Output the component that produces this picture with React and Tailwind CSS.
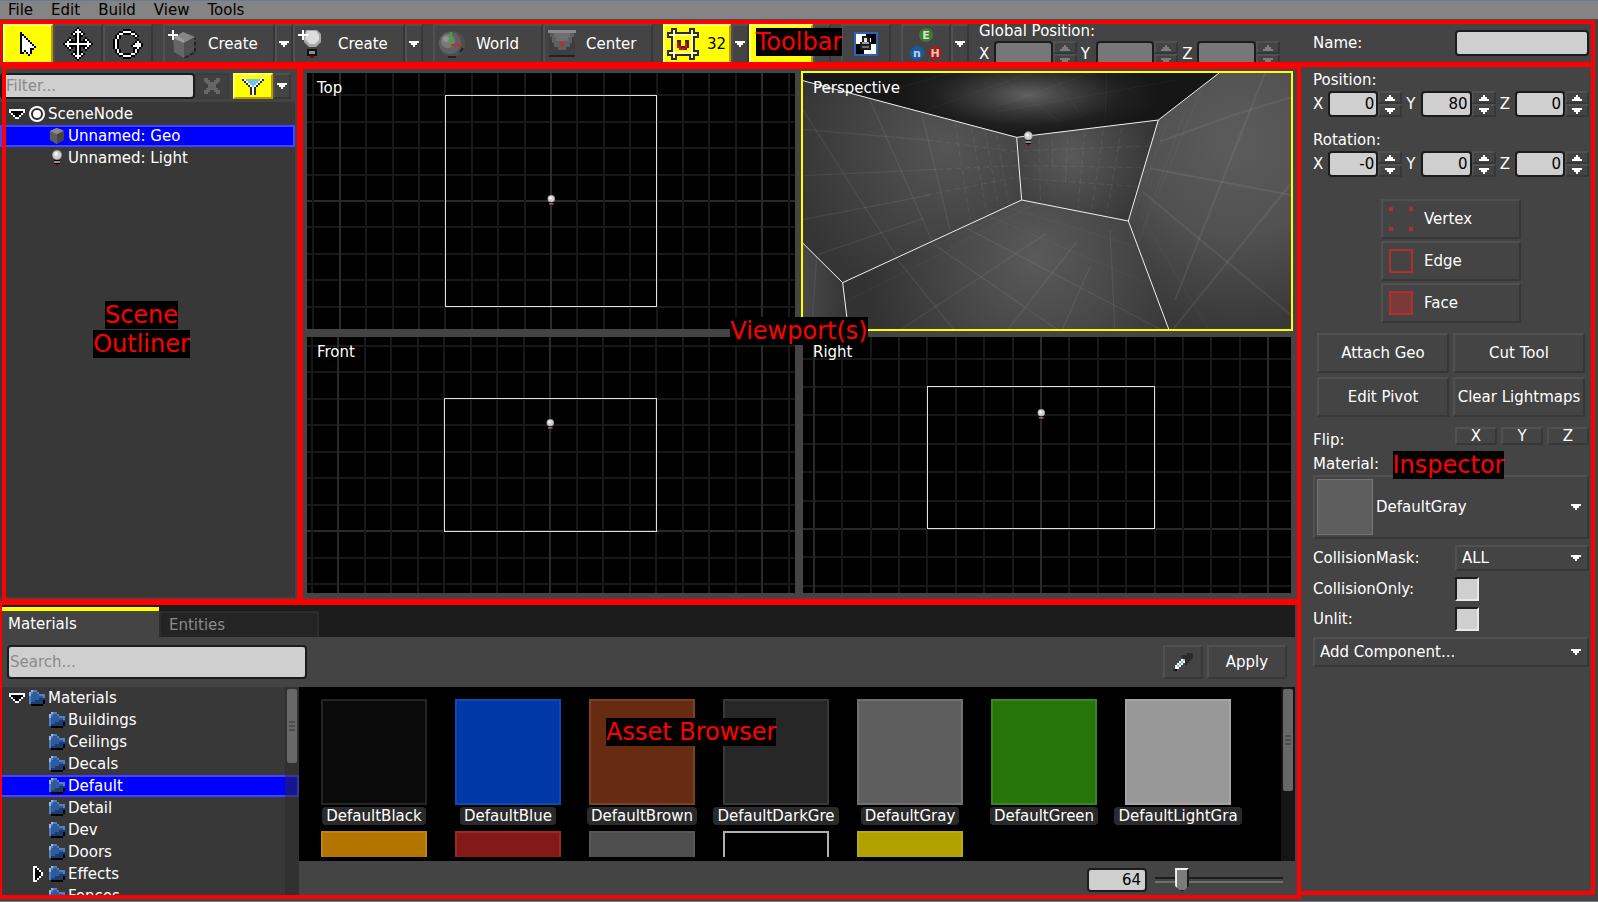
import { useState } from "react";
import clsx from "clsx";

// ---------------- Shared styles ----------------
const bevel =
  "border-2 border-t-[#515151] border-l-[#515151] border-b-[#373737] border-r-[#373737] bg-[#444444]";
const fieldBase =
  "min-w-0 rounded-[4px] border-2 border-[#1c1c1c] text-black placeholder:text-[#8a8a8a] outline-none";
const field = fieldBase + " bg-[#cfcfcf]";
const yellow =
  "border-2 border-t-[#ffff77] border-l-[#ffff77] border-b-[#bb9900] border-r-[#bb9900] bg-[#ffff00] text-black";

// ---------------- Pixel icons ----------------
const COLORS = {
  K: "#000000",
  W: "#ffffff",
  G: "#666666",
  D: "#2b2b2b",
  Y: "#ffff00",
  P: "#ffff9a",
  R: "#b02020",
  M: "#701010",
  L: "#9db8e0",
  B: "#5580c0",
  F: "#2f5a9c",
  N: "#1c3c70",
  C: "#6fc4e8",
};

function Pixels({ rows, className }) {
  return (
    <svg
      width={rows[0].length * 2}
      height={rows.length * 2}
      viewBox={`0 0 ${rows[0].length} ${rows.length}`}
      shapeRendering="crispEdges"
      className={clsx("shrink-0", className)}
      aria-hidden="true"
    >
      {rows.map((row, y) =>
        row
          .split("")
          .map((c, x) =>
            COLORS[c] ? (
              <rect key={`${x}-${y}`} x={x} y={y} width="1" height="1" fill={COLORS[c]} />
            ) : null
          )
      )}
    </svg>
  );
}

const CURSOR = [
  "K.......",
  "KK......",
  "KWK.....",
  "KWWK....",
  "KWWWK...",
  "KWWWWK..",
  "KWWWWWK.",
  "KWWWWWWK",
  "KWWWWKK.",
  "KWKWWK..",
  "KK.KWK..",
  "....K...",
];

const MOVE = [
  ".......K.......",
  "......KWK......",
  ".....KWWWK.....",
  "....KWKWKWK....",
  ".....KKWKK.....",
  "...K..KWK..K...",
  "..KWK.KWK.KWK..",
  ".KWKKKKWKKKKWK.",
  "KWWWWWWWWWWWWWK",
  ".KWKKKKWKKKKWK.",
  "..KWK.KWK.KWK..",
  "...K..KWK..K...",
  ".....KKWKK.....",
  "....KWKWKWK....",
  ".....KWWWK.....",
  "......KWK......",
  ".......K.......",
];

const ROTATE = [
  ".....KKKK......",
  "...KKWWWWKK....",
  "..KWWKKKKWWK...",
  ".KWK......KWK..",
  ".KWK.......K...",
  "KWK.........K..",
  "KWK........KWK.",
  "KWK.......KWWWK",
  "KWK......KWWWWK",
  "KWK.......KKWK.",
  ".KWK......KWK..",
  ".KWK......KWK..",
  "..KWWKKKKWWK...",
  "...KKWWWWKK....",
  ".....KKKK......",
];

const SNAP = [
  "..DDD......DDD..",
  "..DPD......DPD..",
  "DDDPDDDDDDDDPDDD",
  "DPPWPPPPPPPPWPPD",
  "DDDPYYYYYYYYPDDD",
  "..DPYYYYYYYYPD..",
  "..DPYDDYYDDYPD..",
  "..DPYRMYYRMYPD..",
  "..DPYRMYYRMYPD..",
  "..DPYRRMMRMYPD..",
  "..DPYYRRRMYYPD..",
  "DDDPYYYYYYYYPDDD",
  "DPPWPPPPPPPPWPPD",
  "DDDPDDDDDDDDPDDD",
  "..DPD......DPD..",
  "..DDD......DDD..",
];

const FUNNEL = [
  "W.........W",
  "DWCCCCCCCWD",
  ".DWCCCCCWD.",
  "..DWCCCWD..",
  "...DWCWD...",
  "....DWD....",
  "....DWD....",
  "....DWD....",
  "....DWD....",
];

const CROSS = [
  "GG....GG",
  "GGG..GGG",
  ".GGGGGG.",
  "..GGGG..",
  "..GGGG..",
  ".GGGGGG.",
  "GGG..GGG",
  "GG....GG",
];

const FOLDER = [
  ".LBB....",
  "LBFFB...",
  "LFFFFBBB",
  "BFFFFFFB",
  "BFFFFNNN",
  "BFFNNNNK",
  "BNNNNNNK",
  ".KKKKKK.",
];

const ARROW_DOWN = [
  "WWWWWWWW",
  "WKKKKKKW",
  ".WKKKKW.",
  "..WKKW..",
  "...WW...",
];

const ARROW_RIGHT = [
  "WW...",
  "WKW..",
  "WKKW.",
  "WKKKW",
  "WKKKW",
  "WKKW.",
  "WKW..",
  "WW...",
];

const DROPPER = [
  ".......DDD",
  "....DDDDDD",
  ".....DDDDD",
  "....WCDDD.",
  "...WCWDD..",
  "..WCW.D...",
  ".WCW......",
  ".WW.......",
  "DK........",
];

function Caret({ color = "#ffffff", className }) {
  return (
    <svg width="10" height="6" viewBox="0 0 10 6" shapeRendering="crispEdges" className={clsx("shrink-0", className)} aria-hidden="true">
      <path d="M0 0h10v2h-2v2h-2v2h-2v-2h-2v-2h-2z" fill={color} />
    </svg>
  );
}

function BulbShape() {
  return (
    <>
      <circle cx="7" cy="5" r="5" fill="#9a9a9a" />
      <circle cx="7" cy="5" r="4" fill="#cfcfcf" />
      <circle cx="6" cy="4" r="2" fill="#f2f2f2" />
      <rect x="4" y="10" width="6" height="1" fill="#000" />
      <rect x="4" y="11" width="6" height="2" fill="#8f8f8f" />
      <rect x="4" y="13" width="6" height="1" fill="#000" />
      <rect x="6" y="14" width="2" height="2" fill="#8a0000" />
    </>
  );
}

function SmallBulb() {
  return (
    <svg width="16" height="16" viewBox="-1 0 16 16" className="shrink-0" aria-hidden="true">
      <BulbShape />
    </svg>
  );
}

function SceneIcon() {
  return (
    <svg width="16" height="16" viewBox="0 0 16 16" className="shrink-0" aria-hidden="true">
      <circle cx="8" cy="8" r="7" fill="#2b2b2b" stroke="#fff" strokeWidth="2" />
      <circle cx="8" cy="8" r="4" fill="#fff" />
    </svg>
  );
}

function SmallCube() {
  return (
    <svg width="16" height="16" viewBox="1 1 25 26" className="shrink-0" aria-hidden="true">
      <path d="M13 1 24 5 25 20 13 27 2 20 2 6Z" fill="#6f6f6f" />
      <path d="M13 11 25 6 25 20 13 27Z" fill="#444" />
      <path d="M2 6 13 1 24 5 13 11Z" fill="#8a8a8a" />
      <path d="M2 6 13 11 13 27 2 20Z" fill="#5c5c5c" />
    </svg>
  );
}

function Spark() {
  return <path d="M4 0h2v4h4v2h-4v4h-2v-4h-4v-2h4z" fill="#fff" />;
}

function NewGeoIcon() {
  return (
    <svg width="28" height="28" viewBox="0 0 28 28" className="shrink-0" aria-hidden="true">
      <path d="M5 8 15 2 27 7 16 13Z" fill="#868686" />
      <path d="M5 8 16 13 16 28 6 22Z" fill="#666666" />
      <path d="M16 13 27 7 27 22 16 28Z" fill="#4f4f4f" />
      <path d="M5 8 9 5 16 10 16 13Z" fill="#9a9a9a" />
      <path d="M17 28 27 22V8" fill="none" stroke="#222" strokeWidth="2" strokeDasharray="4 2" />
      <Spark />
    </svg>
  );
}

function NewLightIcon() {
  return (
    <svg width="28" height="28" viewBox="0 0 28 28" className="shrink-0" aria-hidden="true">
      <path d="M8 0h11l4 4v8l-5 5h-7l-5-5V5z" fill="#a8a8a8" />
      <path d="M9 1h9l3 4v5l-4 4h-5L7 9z" fill="#dcdcdc" />
      <path d="M9 19h10v7H9z" fill="#111" />
      <path d="M11 21h6v3h-6z" fill="#8a8a8a" />
      <path d="M12 26h4v2h-4z" fill="#8a0000" />
      <Spark />
    </svg>
  );
}

function WorldIcon() {
  return (
    <svg width="28" height="28" viewBox="0 0 28 28" className="shrink-0" aria-hidden="true">
      <circle cx="14" cy="14" r="13" fill="#4e4e4e" />
      <circle cx="12" cy="13" r="11" fill="#606060" />
      <circle cx="10" cy="11" r="7" fill="#7a7a7a" />
      <circle cx="8" cy="9" r="3" fill="#929292" />
      <path d="M10 27h8M22 22l3-4" stroke="#222" strokeWidth="2" />
      <path d="M13 2v13" stroke="#30b030" strokeWidth="2" />
      <path d="M13 15h11" stroke="#b83030" strokeWidth="2" />
    </svg>
  );
}

function CenterIcon() {
  return (
    <svg width="28" height="28" viewBox="0 0 28 28" shapeRendering="crispEdges" className="shrink-0" aria-hidden="true">
      <path d="M1 3h26v24H1z" fill="#3e3e3e" />
      <path d="M1 25h26v2H1z" fill="#222" />
      <path d="M0 0h28v3H0z" fill="#8a8a8a" />
      <path d="M2 3h24v4h-2v6h-2v4h-4v3h-8v-3H6v-4H4V7H2z" fill="#5f5f5f" />
      <path d="M6 3h16v4h-2v4H8V7H6z" fill="#6f6f6f" />
      <path d="M12 12h4v4h-4z" fill="#b83030" />
    </svg>
  );
}

function LockIcon() {
  return (
    <svg width="24" height="24" viewBox="0 0 24 24" shapeRendering="crispEdges" className="shrink-0" aria-hidden="true">
      <path d="M0 0h24v24H0z" fill="#3060b8" />
      <path d="M2 2h20v20H2z" fill="#fff" />
      <path d="M2 12h4v6h4v4H2zM12 2h10v10h-5V6h-5z" fill="#000" />
      <path d="M8 4h6v2h2v4h1v8H6v-8h2z" fill="#1c1c1c" />
      <path d="M10 6h3v4h-3z" fill="#e0e0e0" />
      <path d="M8 10h7v2H8z" fill="#9a9a9a" />
      <path d="M8 14h7v2H8z" fill="#707070" />
    </svg>
  );
}

function AxisIcon() {
  return (
    <svg width="32" height="34" viewBox="0 0 32 34" className="shrink-0 font-bold" fontFamily="DejaVu Sans" fontSize="11" textAnchor="middle" aria-hidden="true">
      <circle cx="16" cy="8" r="7" fill="#3f7a30" />
      <circle cx="7" cy="26" r="7" fill="#1f5a98" />
      <circle cx="25" cy="26" r="7" fill="#982020" />
      <text x="16" y="12" fill="#d0e8c8">E</text>
      <text x="7" y="30" fill="#b8d4f4">n</text>
      <text x="25" y="30" fill="#f0c0b0">H</text>
    </svg>
  );
}

// ---------------- Annotations ----------------
function Frame({ className }) {
  return <div className={clsx("pointer-events-none absolute z-20 border-4 border-[#ff0000]", className)} />;
}

function Note({ className, children }) {
  return (
    <div className={clsx("pointer-events-none absolute z-30 text-center text-[24px] leading-[29px] text-[#ff0000]", className)}>
      <span className="bg-black">{children}</span>
    </div>
  );
}

// ---------------- Menu + Toolbar ----------------
function MenuBar() {
  return (
    <nav className="flex h-5 items-center gap-[18px] border-t border-b border-t-[#6a7a90] border-b-[#4a4a4a] bg-[#848484] px-2 text-black">
      {["File", "Edit", "Build", "View", "Tools"].map((item) => (
        <button key={item} type="button">
          {item}
        </button>
      ))}
    </nav>
  );
}

function ToolButton({ label, icon, className, children }) {
  return (
    <button
      type="button"
      aria-label={label}
      className={clsx("flex h-10 items-center", className || "w-[50px] justify-center " + bevel)}
    >
      {icon}
      {children}
    </button>
  );
}

function DropButton({ label, className }) {
  return (
    <button type="button" aria-label={label} className={clsx("flex w-[18px] items-center justify-center", bevel, className || "h-10")}>
      <Caret />
    </button>
  );
}

function Axis({ name, axis, value, disabled }) {
  const id = `${name}-${axis}`;
  const arrow = disabled ? "#7c7c7c" : "#ffffff";
  return (
    <div className="flex min-w-0 flex-1 items-center">
      <label htmlFor={id} className="w-[15px] shrink-0">
        {axis}
      </label>
      <input
        id={id}
        type="text"
        defaultValue={value}
        disabled={disabled}
        className={clsx("h-[26px] w-0 flex-1 px-0.5 text-right", disabled ? fieldBase + " bg-[#777777]" : field)}
      />
      <div className="mr-1 flex w-6 shrink-0 flex-col">
        <button type="button" aria-label={`${name} ${axis} up`} disabled={disabled} className={clsx("flex h-[13px] items-center justify-center", bevel)}>
          <Caret color={arrow} className="rotate-180" />
        </button>
        <button type="button" aria-label={`${name} ${axis} down`} disabled={disabled} className={clsx("flex h-[13px] items-center justify-center", bevel)}>
          <Caret color={arrow} />
        </button>
      </div>
    </div>
  );
}

function Toolbar() {
  return (
    <header className="relative flex h-[46px] shrink-0 pt-1">
      <div className="flex min-w-0 flex-1 items-start gap-[10px] pl-[3px]">
        <div className="flex">
          <ToolButton label="Select" icon={<Pixels rows={CURSOR} />} className={clsx("w-[50px] justify-center", yellow)} />
          <ToolButton label="Move" icon={<Pixels rows={MOVE} />} />
          <ToolButton label="Rotate" icon={<Pixels rows={ROTATE} />} />
        </div>
        <div className="flex">
          <ToolButton icon={<NewGeoIcon />} className={clsx("w-[112px] gap-3 px-[3px]", bevel)}>
            Create
          </ToolButton>
          <DropButton label="Geometry types" />
          <ToolButton icon={<NewLightIcon />} className={clsx("w-[112px] gap-3 px-[3px]", bevel)}>
            Create
          </ToolButton>
          <DropButton label="Entity types" />
        </div>
        <div className="flex">
          <ToolButton icon={<WorldIcon />} className={clsx("w-[110px] gap-[10px] px-[3px]", bevel)}>
            World
          </ToolButton>
          <ToolButton icon={<CenterIcon />} className={clsx("w-[110px] gap-[10px] px-[3px]", bevel)}>
            Center
          </ToolButton>
        </div>
        <div className="flex">
          <ToolButton icon={<Pixels rows={SNAP} />} className={clsx("w-[68px] gap-2 px-0.5", yellow)}>
            32
          </ToolButton>
          <DropButton label="Grid sizes" />
          <ToolButton label="Angle snap" className={clsx("w-16 px-0.5", yellow)} />
          <DropButton label="Snap angles" />
        </div>
        <ToolButton label="Texture lock" icon={<LockIcon />} />
        <div className="flex">
          <ToolButton label="Gizmo axes" icon={<AxisIcon />} />
          <DropButton label="Axis options" />
        </div>
        <fieldset className="w-[305px]">
          <legend className="float-left w-full leading-[14px]">Global Position:</legend>
          <div className="flex w-full pt-[3px]">
            <Axis name="global" axis="X" disabled />
            <Axis name="global" axis="Y" disabled />
            <Axis name="global" axis="Z" disabled />
          </div>
        </fieldset>
      </div>
      <div className="flex w-[299px] shrink-0 items-center justify-between pr-[9px] pb-1 pl-[14px]">
        <label htmlFor="node-name">Name:</label>
        <input id="node-name" type="text" className={clsx("h-[26px] w-[134px] px-1", field)} />
      </div>
      <Frame className="top-0 right-[3px] bottom-0 -left-0.5" />
      <Note className="inset-x-0 top-2">Toolbar</Note>
    </header>
  );
}

// ---------------- Scene outliner ----------------
function TreeRow({ level = 0, arrow, icon, selected, children }) {
  return (
    <li
      className={clsx(
        "flex h-[22px] items-center border-2 pl-[7px]",
        selected ? "border-[#4444ff] bg-[#0000ff]" : "border-transparent"
      )}
    >
      <span className={clsx("flex shrink-0 items-center", level ? "w-10 justify-end pr-1.5" : "w-5")}>
        {arrow && <Pixels rows={arrow} />}
      </span>
      {icon}
      <span className="ml-[3px]">{children}</span>
    </li>
  );
}

function SceneOutliner() {
  const [filter, setFilter] = useState("");

  return (
    <section className="relative flex w-[299px] shrink-0 flex-col pt-[7px] pb-1">
      <div className="flex pr-2 pb-[3px]">
        <input
          type="text"
          aria-label="Filter"
          placeholder="Filter..."
          value={filter}
          onChange={(e) => setFilter(e.target.value)}
          className={clsx("h-[26px] flex-1 pl-1", field)}
        />
        <button type="button" aria-label="Clear filter" onClick={() => setFilter("")} className="mr-1 flex h-[26px] w-[34px] items-center justify-center border-2 border-[#3c3c3c] bg-[#404040]">
          <Pixels rows={CROSS} />
        </button>
        <button type="button" aria-label="Filter types" className={clsx("flex h-[26px] w-10 items-center justify-center", yellow)}>
          <Pixels rows={FUNNEL} />
        </button>
        <DropButton label="Filter options" className="h-[26px]" />
      </div>
      <ul className="mr-1 flex-1 bg-[#383838] pt-px">
        <TreeRow arrow={ARROW_DOWN} icon={<SceneIcon />}>SceneNode</TreeRow>
        <TreeRow level={1} icon={<SmallCube />} selected>Unnamed: Geo</TreeRow>
        <TreeRow level={1} icon={<SmallBulb />}>Unnamed: Light</TreeRow>
      </ul>
      <Frame className="-top-px -right-1 -bottom-0.5 left-0.5" />
      <Note className="inset-x-0 top-[235px] mx-auto w-[120px] pr-4">Scene Outliner</Note>
    </section>
  );
}

// ---------------- Viewports ----------------
// every 8th line is brighter
function gridLines(origin, pitch, size, major) {
  const lines = [];
  const first = -Math.floor(origin / pitch);
  for (let i = first; origin + i * pitch < size; i++) {
    lines.push({ at: Math.round(origin + i * pitch), bright: i % major === 0 });
  }
  return lines.sort((a, b) => a.bright - b.bright);
}

function OrthoView({ title, ox, oy, pitch, box, bulb }) {
  return (
    <div className="relative min-h-0 overflow-hidden bg-black">
      <svg viewBox="0 0 488 256" preserveAspectRatio="xMidYMid slice" className="absolute inset-0 h-full w-full" aria-hidden="true">
        <g shapeRendering="crispEdges">
          {gridLines(oy, pitch, 256, 8).map((l) => (
            <rect key={`h${l.at}`} x="0" y={l.at - 1} width="488" height="2" fill={l.bright ? "#2a2a2a" : "#181818"} />
          ))}
          {gridLines(ox, pitch, 488, 8).map((l) => (
            <rect key={`v${l.at}`} x={l.at - 1} y="0" width="2" height="256" fill={l.bright ? "#2a2a2a" : "#181818"} />
          ))}
        </g>
        <rect x={box[0]} y={box[1]} width={box[2]} height={box[3]} fill="none" stroke="#e0e0e0" />
        <g transform={`translate(${bulb[0] - 5} ${bulb[1] - 4}) scale(0.75)`}>
          <BulbShape />
        </g>
      </svg>
      <h2 className="relative pt-1 pl-[10px]">{title}</h2>
    </div>
  );
}

const WALLS = [
  { id: "ceiling", points: "39,39 39,62 680,232 1105,180 1287,39" },
  { id: "left", points: "39,62 680,232 695,420 158,668 39,550" },
  { id: "back", points: "680,232 1105,180 1015,483 695,420" },
  { id: "right", points: "1105,180 1287,39 1503,39 1503,807 1136,807 1015,483" },
  { id: "floor", points: "695,420 1015,483 1136,807 175,807 158,668" },
  { id: "near", points: "39,550 158,668 175,807 39,807" },
];

const SOLID_LINES = [
  // left wall
  "M39 150 160 340 320 590",
  "M240 120 425 540",
  "M395 160 480 510",
  "M39 208 410 240",
  "M39 347 440 328",
  "M39 479 420 405",
  "M80 585 400 475",
  // floor
  "M320 595 490 807",
  "M420 545 800 807",
  "M520 500 1110 807",
  "M860 545 655 807",
  "M900 620 818 807",
  "M960 510 975 807",
  "M770 520 335 807",
  // near wall
  "M80 590 65 807",
];

const BOLD_LINES = [
  // right wall
  "M1503 112 1330 165 1110 245",
  "M1425 39 1155 720",
  "M1080 325 1503 405",
  "M1503 370 1150 807",
  "M1058 395 1503 765",
];

const DASHED_LINES = [
  "M495 190 540 480",
  "M545 205 590 460",
  "M585 215 625 440",
  "M620 225 655 430",
  "M410 240 680 275",
  "M440 328 690 316",
  "M410 405 690 350",
  "M749 235 751 430",
  "M787 240 788 318",
  "M833 235 826 365",
  "M884 215 864 445",
  "M940 210 905 450",
  "M995 205 950 460",
  "M700 272 1075 258",
  "M700 317 1060 323",
  "M700 355 1040 380",
];

const FAINT_LINES = [
  "M600 470 1085 675",
  "M1050 460 1255 807",
  "M1235 85 1040 560",
  "M1190 140 1060 500",
  "M1130 190 1025 480",
  "M660 445 1040 560",
  "M740 430 480 560",
  "M690 440 400 570",
  "M620 500 175 720",
  "M400 155 720 39",
  "M615 39 810 185",
  "M240 110 480 39",
  "M785 39 880 175",
  "M950 39 945 190",
  "M620 140 900 39",
  "M620 155 1160 60",
  "M39 610 170 740",
];

function PerspectiveView() {
  return (
    <div className="relative -m-0.5 min-h-0 overflow-hidden border-2 border-[#ffff00] bg-[#444444]">
      <svg viewBox="39 39 1464 768" preserveAspectRatio="xMidYMid slice" className="absolute inset-0 h-full w-full" aria-hidden="true">
        <defs>
          <radialGradient id="ceiling" gradientUnits="userSpaceOnUse" cx="0" cy="0" r="1" gradientTransform="translate(715 105) scale(400 130)">
            <stop offset="0" stopColor="#606060" />
            <stop offset="0.35" stopColor="#3c3c3c" />
            <stop offset="0.7" stopColor="#202020" />
            <stop offset="1" stopColor="#161616" />
          </radialGradient>
          <radialGradient id="left" gradientUnits="userSpaceOnUse" cx="470" cy="260" r="480">
            <stop offset="0" stopColor="#555555" />
            <stop offset="0.5" stopColor="#454545" />
            <stop offset="1" stopColor="#353535" />
          </radialGradient>
          <radialGradient id="back" gradientUnits="userSpaceOnUse" cx="840" cy="290" r="270">
            <stop offset="0" stopColor="#5a5a5a" />
            <stop offset="1" stopColor="#343434" />
          </radialGradient>
          <radialGradient id="right" gradientUnits="userSpaceOnUse" cx="1340" cy="250" r="560">
            <stop offset="0" stopColor="#5c5c5c" />
            <stop offset="0.5" stopColor="#515151" />
            <stop offset="1" stopColor="#383838" />
          </radialGradient>
          <radialGradient id="floor" gradientUnits="userSpaceOnUse" cx="740" cy="590" r="520">
            <stop offset="0" stopColor="#5a5a5a" />
            <stop offset="0.5" stopColor="#474747" />
            <stop offset="1" stopColor="#323232" />
          </radialGradient>
          <linearGradient id="near" x1="0" y1="0" x2="1" y2="0">
            <stop offset="0" stopColor="#484848" />
            <stop offset="1" stopColor="#353535" />
          </linearGradient>
        </defs>
        {WALLS.map((wall) => (
          <polygon key={wall.id} points={wall.points} fill={`url(#${wall.id})`} />
        ))}
        <g fill="none" stroke="#ffffff" strokeOpacity="0.07">
          {SOLID_LINES.map((d) => (
            <path key={d} d={d} strokeWidth="4" />
          ))}
          {BOLD_LINES.map((d) => (
            <path key={d} d={d} strokeWidth="6" />
          ))}
          {DASHED_LINES.map((d) => (
            <path key={d} d={d} strokeWidth="3" strokeDasharray="18 10" />
          ))}
        </g>
        <g fill="none" stroke="#ffffff" strokeOpacity="0.04" strokeWidth="3">
          {FAINT_LINES.map((d) => (
            <path key={d} d={d} />
          ))}
        </g>
        <g fill="none" stroke="#f0f0f0" strokeWidth="3">
          <path d="M39 62 680 232 1105 180 1287 39" />
          <path d="M680 232 695 420 1015 483 1105 180" />
          <path d="M39 550 158 668 695 420M158 668 175 807M1015 483 1136 807" />
        </g>
        <g transform="translate(696 214) scale(2.7)">
          <BulbShape />
        </g>
      </svg>
      <h2 className="relative pt-1 pl-[10px]">Perspective</h2>
    </div>
  );
}

function Viewports() {
  return (
    <main className="relative grid min-w-0 flex-1 grid-cols-2 grid-rows-2 gap-2 px-2 pt-[7px] pb-2">
      <OrthoView title="Top" ox={244} oy={128} pitch={26.4} box={[138.5, 22.5, 211, 211]} bulb={[244, 126]} />
      <PerspectiveView />
      <OrthoView title="Front" ox={243} oy={194} pitch={26.5} box={[137.5, 61.5, 212, 133]} bulb={[243, 86]} />
      <OrthoView title="Right" ox={238} oy={192} pitch={28.4} box={[124.5, 49.5, 227, 142]} bulb={[238, 76]} />
      <Frame className="-top-px -right-0.5 -bottom-0.5 -left-0.5" />
      <Note className="inset-x-0 top-[251px]">Viewport(s)</Note>
    </main>
  );
}

// ---------------- Asset browser ----------------
const FOLDERS = ["Buildings", "Ceilings", "Decals", "Default", "Detail", "Dev", "Doors", "Effects", "Fences"];

const MATERIALS = [
  { name: "DefaultBlack", color: "border-[#242424] bg-[#0b0b0b]" },
  { name: "DefaultBlue", color: "border-[#0a4cb0] bg-[#0038a8]" },
  { name: "DefaultBrown", color: "border-[#78422a] bg-[#662b11]" },
  { name: "DefaultDarkGre", color: "border-[#383838] bg-[#272727]" },
  { name: "DefaultGray", color: "border-[#707070] bg-[#5e5e5e]" },
  { name: "DefaultGreen", color: "border-[#3c8428] bg-[#267509]" },
  { name: "DefaultLightGra", color: "border-[#a4a4a4] bg-[#989898]" },
  { color: "border-[#c08414] bg-[#b37400]" },
  { color: "border-[#942c2c] bg-[#841919]" },
  { color: "border-[#575757] bg-[#4e4e4e]" },
  { color: "border-[#b0b0b0] bg-black" },
  { color: "border-[#b8ac10] bg-[#b0a000]" },
];

function ScrollBar({ thumb }) {
  return (
    <div className="absolute inset-y-0 right-0 w-[14px] bg-[#2a2a2a]/50 px-0.5 pt-0.5">
      <div className={clsx("flex flex-col items-center justify-center gap-0.5 rounded-[2px] bg-[#686868]", thumb)}>
        <i className="h-0.5 w-1.5 bg-[#4c4c4c]" />
        <i className="h-0.5 w-1.5 bg-[#4c4c4c]" />
        <i className="h-0.5 w-1.5 bg-[#4c4c4c]" />
      </div>
    </div>
  );
}

function AssetBrowser() {
  const [size, setSize] = useState(64);

  return (
    <section className="relative flex h-[300px] shrink-0 flex-col pt-1 pr-1 pb-0.5">
      <div className="flex h-8 items-end bg-[#1c1c1c] pl-0.5" role="tablist">
        <button type="button" role="tab" aria-selected="true" className="h-[30px] w-[157px] border-t-4 border-t-[#ffff00] bg-[#444444] px-1.5 text-left">
          Materials
        </button>
        <button type="button" role="tab" aria-selected="false" className="h-[26px] w-[160px] border-2 border-b-0 border-[#2c2c2c] bg-[#242424] px-2 text-left text-[#8a8a8a]">
          Entities
        </button>
      </div>
      <div className="flex h-[50px] shrink-0 items-center gap-1 pr-2 pl-[7px]">
        <input type="text" aria-label="Search materials" placeholder="Search..." className={clsx("mr-auto h-[34px] w-[300px] px-px", field)} />
        <button type="button" aria-label="Pick material" className={clsx("flex h-[34px] w-10 items-center justify-center", bevel)}>
          <Pixels rows={DROPPER} />
        </button>
        <button type="button" className={clsx("h-[34px] w-20", bevel)}>
          Apply
        </button>
      </div>
      <div className="flex min-h-0 flex-1">
        <div className="relative w-[299px] shrink-0 overflow-hidden bg-[#383838]">
          <ul>
            <TreeRow arrow={ARROW_DOWN} icon={<Pixels rows={FOLDER} />}>Materials</TreeRow>
            {FOLDERS.map((name) => (
              <TreeRow
                key={name}
                level={1}
                arrow={name === "Effects" ? ARROW_RIGHT : null}
                icon={<Pixels rows={FOLDER} />}
                selected={name === "Default"}
              >
                {name}
              </TreeRow>
            ))}
          </ul>
          <ScrollBar thumb="h-[74px]" />
        </div>
        <div className="flex min-w-0 flex-1 flex-col">
          <div className="relative h-[174px] overflow-hidden bg-black pb-1">
            <div className="flex h-full flex-wrap content-start gap-x-1 gap-y-1.5 overflow-hidden pt-3 pr-[14px] pl-[10px]">
              {MATERIALS.map((m) => (
                <figure key={m.color} className="flex w-[130px] flex-col items-center gap-0.5">
                  <div className={clsx("size-[106px] border-2", m.color)} />
                  {m.name && (
                    <figcaption className="h-[18px] rounded-[4px] bg-[#2a2a2a] px-1 leading-[18px]">{m.name}</figcaption>
                  )}
                </figure>
              ))}
            </div>
            <ScrollBar thumb="h-[102px]" />
          </div>
          <div className="flex flex-1 items-center justify-end gap-2 pr-3">
            <input
              type="text"
              aria-label="Thumbnail size"
              value={size}
              onChange={(e) => setSize(Number(e.target.value) || 0)}
              className={clsx("h-6 w-[60px] px-1 text-right", field)}
            />
            <input
              type="range"
              aria-label="Thumbnail size slider"
              min="16"
              max="288"
              value={size}
              onChange={(e) => setSize(Number(e.target.value))}
              className="h-6 w-32 appearance-none bg-transparent [&::-webkit-slider-runnable-track]:h-1.5 [&::-webkit-slider-runnable-track]:border-y-2 [&::-webkit-slider-runnable-track]:border-t-[#1c1c1c] [&::-webkit-slider-runnable-track]:border-b-[#707070] [&::-webkit-slider-thumb]:-mt-[11px] [&::-webkit-slider-thumb]:h-6 [&::-webkit-slider-thumb]:w-3.5 [&::-webkit-slider-thumb]:appearance-none [&::-webkit-slider-thumb]:border-2 [&::-webkit-slider-thumb]:border-t-[#f0f0f0] [&::-webkit-slider-thumb]:border-r-[#1c1c1c] [&::-webkit-slider-thumb]:border-b-[#1c1c1c] [&::-webkit-slider-thumb]:border-l-[#f0f0f0] [&::-webkit-slider-thumb]:bg-[#7c7c7c] [&::-webkit-slider-thumb]:[clip-path:polygon(0_0,100%_0,100%_75%,50%_100%,0_75%)]"
            />
          </div>
        </div>
      </div>
      <Frame className="top-0 -right-0.5 bottom-0.5 -left-0.5" />
      <Note className="top-[117px] left-[606px]">Asset Browser</Note>
    </section>
  );
}

// ---------------- Inspector ----------------
function Vector({ title, name, values }) {
  return (
    <fieldset className="-mr-1">
      <legend>{title}</legend>
      <div className="flex">
        <Axis name={name} axis="X" value={values[0]} />
        <Axis name={name} axis="Y" value={values[1]} />
        <Axis name={name} axis="Z" value={values[2]} />
      </div>
    </fieldset>
  );
}

function Select({ id, label, options, className, wrap }) {
  return (
    <div className={clsx("relative", wrap)}>
      <select id={id} aria-label={label} className={clsx("block w-full appearance-none outline-none", bevel, className)}>
        {options.map((o) => (
          <option key={o}>{o}</option>
        ))}
      </select>
      <Caret className="pointer-events-none absolute top-1/2 right-2 -translate-y-1/2" />
    </div>
  );
}

function ModeButton({ shape, children }) {
  return (
    <button type="button" className={clsx("flex h-10 items-center gap-[11px] px-1.5", bevel)}>
      {shape}
      {children}
    </button>
  );
}

function CheckRow({ id, label }) {
  return (
    <div className="flex h-6 items-center justify-between">
      <label htmlFor={id}>{label}</label>
      <div className="w-[134px]">
        <input
          id={id}
          type="checkbox"
          className="block size-6 appearance-none border-2 border-t-[#1c1c1c] border-r-[#e8e8e8] border-b-[#e8e8e8] border-l-[#1c1c1c] bg-[#cfcfcf]"
        />
      </div>
    </div>
  );
}

function Inspector() {
  return (
    <aside className="relative flex w-[299px] shrink-0 flex-col pt-[3px] pr-[9px] pl-[14px]">
      <div className="flex flex-col gap-3">
        <Vector title="Position:" name="position" values={["0", "80", "0"]} />
        <Vector title="Rotation:" name="rotation" values={["-0", "0", "0"]} />
      </div>

      <div className="mx-auto mt-[22px] flex w-[140px] flex-col gap-0.5">
        <ModeButton
          shape={
            <svg width="24" height="24" fill="#b03030" aria-hidden="true">
              <path d="M0 0h4v4h-4zM20 0h4v4h-4zM0 20h4v4h-4zM20 20h4v4h-4z" />
            </svg>
          }
        >
          Vertex
        </ModeButton>
        <ModeButton shape={<span className="size-6 border-2 border-[#b03030]" />}>Edge</ModeButton>
        <ModeButton shape={<span className="size-6 border-2 border-[#b03030] bg-[#7a3a3a]" />}>Face</ModeButton>
      </div>

      <div className="mx-1 mt-[10px] grid grid-cols-2 gap-1 whitespace-nowrap">
        {["Attach Geo", "Cut Tool", "Edit Pivot", "Clear Lightmaps"].map((name) => (
          <button key={name} type="button" className={clsx("flex h-10 items-center justify-center", bevel)}>
            {name}
          </button>
        ))}
      </div>

      <div className="mt-[10px] flex h-6 items-start justify-between">
        <span className="pt-0.5">Flip:</span>
        <div className="flex w-[134px] gap-1">
          {["X", "Y", "Z"].map((axis) => (
            <button key={axis} type="button" className={clsx("h-[18px] flex-1 leading-[14px]", bevel)}>
              {axis}
            </button>
          ))}
        </div>
      </div>

      <label htmlFor="material" className="mt-0.5">
        Material:
      </label>
      <div className="relative">
        <Select id="material" options={["DefaultGray"]} className="h-16 pl-[61px]" />
        <span className="pointer-events-none absolute top-1 left-1 size-14 border border-[#757575] bg-[#5e5e5e]" />
      </div>

      <div className="mt-1.5 flex h-[26px] items-center justify-between">
        <label htmlFor="mask">CollisionMask:</label>
        <Select id="mask" options={["ALL"]} wrap="w-[134px]" className="h-[26px] pl-[5px]" />
      </div>
      <div className="mt-1.5 flex flex-col gap-1.5">
        <CheckRow id="collision-only" label="CollisionOnly:" />
        <CheckRow id="unlit" label="Unlit:" />
      </div>
      <Select label="Add component" options={["Add Component..."]} wrap="mt-1.5" className="h-[30px] pl-[5px]" />

      <Frame className="-top-[3px] right-[3px] bottom-1.5 -left-0.5" />
      <Note className="inset-x-0 top-[385px]">Inspector</Note>
    </aside>
  );
}

export default function App() {
  return (
    <div className="flex h-screen flex-col overflow-hidden border-b border-b-[#6a7a88] bg-[#444444] font-['DejaVu_Sans',sans-serif] text-[15px] leading-[22px] text-white">
      <MenuBar />
      <Toolbar />
      <div className="flex min-h-0 flex-1">
        <div className="flex min-w-0 flex-1 flex-col">
          <div className="flex min-h-0 flex-1">
            <SceneOutliner />
            <Viewports />
          </div>
          <AssetBrowser />
        </div>
        <Inspector />
      </div>
    </div>
  );
}
